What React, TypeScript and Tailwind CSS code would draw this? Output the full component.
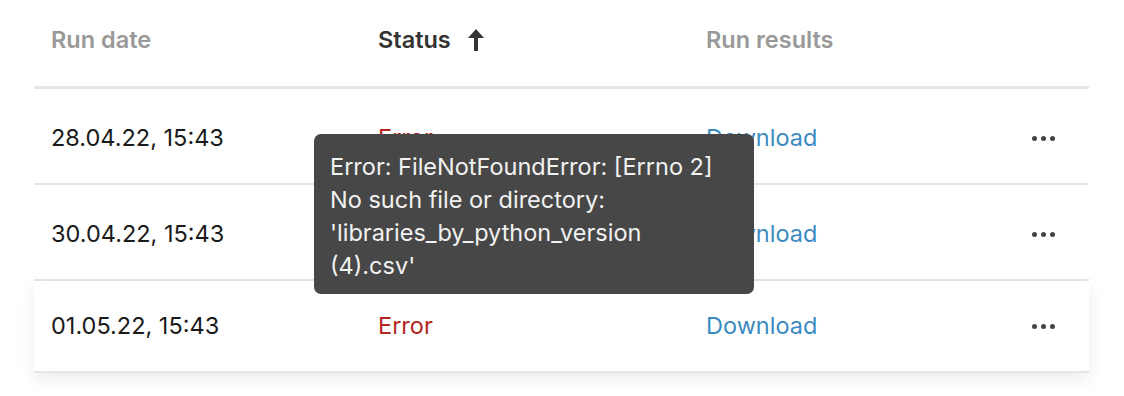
const rows = [
  { date: '28.04.22, 15:43', h: 'h-[96px] pt-1' },
  { date: '30.04.22, 15:43', h: 'h-[96px] pt-1' },
  { date: '01.05.22, 15:43', h: 'h-[92px]', hover: true },
];

function Dots() {
  return (
    <div className="flex items-center gap-[4px]">
      <span className="h-[5px] w-[5px] rounded-full bg-[#444]" />
      <span className="h-[5px] w-[5px] rounded-full bg-[#444]" />
      <span className="h-[5px] w-[5px] rounded-full bg-[#444]" />
    </div>
  );
}

function ArrowUp() {
  return (
    <svg width="16" height="22" viewBox="0 0 16 22" className="ml-[17px]">
      <path d="M8 0 L16 9 L10 9 L10 22 L6 22 L6 9 L0 9 Z" fill="#333" />
    </svg>
  );
}

export default function App() {
  return (
    <div className="relative h-[396px] w-[1124px] bg-white font-['Inter',sans-serif] text-[23.5px]">
      <div className="ml-[34px] w-[1055px]">
        <div className="flex h-[89px] items-start border-b-[3px] border-[#e6e6e6] pt-[22px] font-semibold">
          <div className="w-[344px] pl-[17px] text-[#999]">Run date</div>
          <div className="flex w-[328px] items-center text-[#333]">
            Status
            <ArrowUp />
          </div>
          <div className="text-[#999]">Run results</div>
        </div>
        {rows.map((r) => (
          <div
            key={r.date}
            className={`flex items-center border-b-2 border-[#e6e6e6] ${r.h} ${
              r.hover ? 'relative bg-white shadow-[0_6px_16px_rgba(0,0,0,0.08)]' : ''
            }`}
          >
            <div className="w-[344px] pl-[17px] text-[#1a1a1a]">{r.date}</div>
            <div className="w-[328px] text-[#b3261e]">Error</div>
            <div className="w-[326px] text-[#3b8bc2]">Download</div>
            <Dots />
          </div>
        ))}
      </div>

      <div className="absolute left-[314px] top-[134px] h-[160px] w-[440px] rounded-[7px] bg-[#474747] px-[16px] pt-[16px] leading-[33px] text-[#f2f2f2]">
        Error: FileNotFoundError: [Errno 2]
        <br />
        No such file or directory:
        <br />
        'libraries_by_python_version
        <br />
        (4).csv'
      </div>
    </div>
  );
}
